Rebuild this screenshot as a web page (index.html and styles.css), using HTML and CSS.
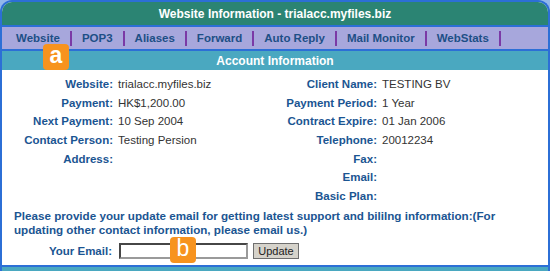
FILE: index.html
```html
<!DOCTYPE html>
<html lang="en">
<head>
    <meta charset="UTF-8">
    <title>Website Information</title>
    <link rel="stylesheet" href="styles.css">
</head>
<body>
    <div class="frame">
        <div class="title">Website Information - trialacc.myfiles.biz</div>
        <div class="tabs">
            <span class="tab">Website<span class="badge badge-a">a</span></span>
            <span class="tab">POP3</span>
            <span class="tab">Aliases</span>
            <span class="tab">Forward</span>
            <span class="tab">Auto Reply</span>
            <span class="tab">Mail Monitor</span>
            <span class="tab">WebStats</span>
        </div>
        <div class="bar">Account Information</div>
        <div class="content">
            <div class="info">
                <span class="lbl">Website:</span><span class="val">trialacc.myfiles.biz</span>
                <span class="lbl">Client Name:</span><span class="val">TESTING BV</span>

                <span class="lbl">Payment:</span><span class="val">HK$1,200.00</span>
                <span class="lbl">Payment Period:</span><span class="val">1 Year</span>

                <span class="lbl">Next Payment:</span><span class="val">10 Sep 2004</span>
                <span class="lbl">Contract Expire:</span><span class="val">01 Jan 2006</span>

                <span class="lbl">Contact Person:</span><span class="val">Testing Persion</span>
                <span class="lbl">Telephone:</span><span class="val">20012234</span>

                <span class="lbl">Address:</span><span class="val"></span>
                <span class="lbl">Fax:</span><span class="val"></span>

                <span class="lbl"></span><span class="val"></span>
                <span class="lbl">Email:</span><span class="val"></span>

                <span class="lbl"></span><span class="val"></span>
                <span class="lbl">Basic Plan:</span><span class="val"></span>
            </div>
            <p class="notice">Please provide your update email for getting latest support and bililng information:(For updating other contact information, please <a href="#">email us.</a>)</p>
            <div class="email-row">
                <span class="lbl">Your Email:</span>
                <span class="field">
                    <input type="text" class="email-input">
                    <span class="badge badge-b">b</span>
                </span>
                <button type="button" class="update-btn">Update</button>
            </div>
        </div>
        <div class="bar bottom-bar">Website Information</div>
    </div>
</body>
</html>
```

FILE: styles.css
```css
body {
    margin: 0;
    background: #92b8ea; /* light blue page */
    font-family: "Liberation Sans", Arial, sans-serif;
}

.frame {
    width: 546px;
    height: 300px;
    border: 2px solid #2c6fd6;
    border-bottom: none;
    border-radius: 12px 12px 0 0;
    overflow: hidden;
    background: #ffffff;
}

.title {
    height: 23px;
    line-height: 25px;
    background: #2b8473;
    color: #ffffff;
    font-weight: bold;
    font-size: 12px;
    text-align: center;
}

.tabs {
    display: flex;
    align-items: center;
    height: 22px;
    padding-left: 4px;
    background: #a7a7dc;
    border-top: 2px solid #2c6fd6;
    border-bottom: 2px solid #2c6fd6;
}

.tab {
    position: relative;
    padding: 0 10px;
    border-right: 2px solid #7b3aa6;
    line-height: 15px;
    font-size: 11.5px;
    font-weight: bold;
    color: #1d4f86;
}

.badge {
    position: absolute;
    width: 26px;
    height: 26px;
    border-radius: 4px;
    background: #f7931e;
    color: #ffffff;
    font-size: 23px;
    line-height: 23px;
    text-align: center;
}

.badge-a {
    left: 37px;
    top: 13px;
}

.badge-b {
    left: 51px;
    top: -6px;
}

.bar {
    height: 19px;
    line-height: 20px;
    background: #4aa8c0;
    color: #ffffff;
    font-weight: bold;
    font-size: 12px;
    text-align: center;
}

.content {
    padding: 5px 0 5px;
}

.info {
    display: grid;
    grid-template-columns: 116px 150px 114px auto;
    grid-auto-rows: 18.6px;
    align-items: center;
}

.lbl {
    text-align: right;
    padding-right: 5px;
    font-size: 11.5px;
    font-weight: bold;
    color: #1b5592;
}

.val {
    font-size: 11.5px;
    color: #333333;
}

.notice {
    margin: 4px 0 0;
    padding: 0 30px 0 12px;
    font-size: 11.65px;
    line-height: 13.5px;
    font-weight: bold;
    color: #1b5592;
}

.notice a {
    color: #1b5592;
    text-decoration: none;
}

.email-row {
    display: flex;
    align-items: center;
    height: 19px;
    margin-top: 5px;
}

.email-row .lbl {
    width: 110px;
}

.field {
    position: relative;
    margin-left: 2px;
}

.email-input {
    display: block;
    width: 125px;
    height: 12px;
    margin: 0;
    padding: 0;
    border: 2px inset #9a9a9a;
    background: #ffffff;
}

.update-btn {
    margin-left: 5px;
    height: 16px;
    width: 46px;
    padding: 0;
    border: 1px solid #6f6f6f;
    background: #d6d3cb;
    font-family: "Liberation Sans", Arial, sans-serif;
    font-size: 11px;
    color: #222222;
}

.bottom-bar {
    border-top: 2px solid #2c6fd6;
}
```
